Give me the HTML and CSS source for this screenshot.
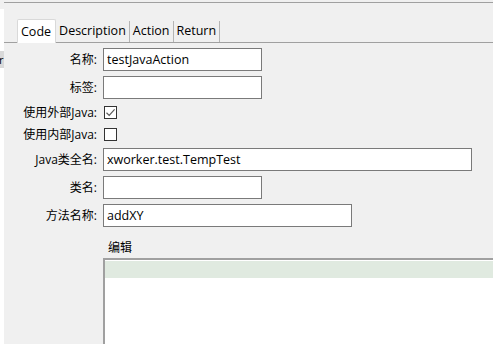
FILE: index.html
```html
<!DOCTYPE html>
<html>
<head>
<meta charset="utf-8">
<link rel="stylesheet" href="styles.css">
</head>
<body>
<div class="app">
  <div class="sidebar">
    <div class="side-item">r</div>
  </div>
  <div class="main">
    <div class="tabs">
      <div class="tab active">Code</div>
      <div class="tab">Description</div>
      <div class="tab">Action</div>
      <div class="tab">Return</div>
    </div>
    <div class="form">
      <label class="lbl">名称:</label>
      <div class="field"><input class="input short" value="testJavaAction"></div>
      <label class="lbl">标签:</label>
      <div class="field"><input class="input short" value=""></div>
      <label class="lbl chk-row">使用外部Java:</label>
      <div class="field chk-row"><span class="checkbox checked"><svg viewBox="0 0 13 13" width="13" height="13"><path d="M2.5 6.8 L5.2 9.4 L10.6 3.4" fill="none" stroke="#5a5a5a" stroke-width="1.2"/></svg></span></div>
      <label class="lbl chk-row">使用内部Java:</label>
      <div class="field chk-row"><span class="checkbox"></span></div>
      <label class="lbl">Java类全名:</label>
      <div class="field"><input class="input long" value="xworker.test.TempTest"></div>
      <label class="lbl">类名:</label>
      <div class="field"><input class="input short" value=""></div>
      <label class="lbl">方法名称:</label>
      <div class="field"><input class="input mid" value="addXY"></div>
    </div>
    <div class="editor-label">编辑</div>
    <div class="editor">
      <div class="editor-line"></div>
    </div>
  </div>
</div>
</body>
</html>
```
FILE: styles.css
```css
html, body {
  margin: 0;
  padding: 0;
  background: #f0f0f0;
  overflow: hidden;
  width: 493px;
  height: 344px;
}
body {
  font-family: "Open Sans", "Noto Sans CJK SC", sans-serif;
  font-size: 12px;
  color: #000;
}
.app {
  display: flex;
  height: 344px;
}
.sidebar {
  width: 4px;
  flex: none;
  background: #fff;
  margin-top: 9px;
  overflow: hidden;
}
.side-item {
  margin-top: 42px;
  height: 17px;
  background: #d9d9d9;
  line-height: 17px;
  font-size: 11px;
  text-indent: -1px;
}
.main {
  flex: 1;
  min-width: 0;
  display: flex;
  flex-direction: column;
  margin-top: 2px;
  border-top: 1px solid #a0a0a0;
}
.tabs {
  display: flex;
  align-items: flex-end;
  padding: 16px 0 0 13px;
  border-bottom: 1px solid #a0a0a0;
  height: 23px;
}
.tab {
  height: 21px;
  line-height: 20px;
  padding: 0 3px;
  font-size: 12.5px;
  border-right: 1px solid #b4b4b4;
  box-sizing: border-box;
}
.tab.active {
  height: 24px;
  line-height: 24px;
  margin-bottom: -1px;
  background: #fff;
  border: 1px solid #d9d9d9;
  border-bottom: none;
  border-radius: 2px 2px 0 0;
  padding: 0 4px 0 3px;
}
.form {
  display: grid;
  grid-template-columns: 93px 1fr;
  column-gap: 6px;
  row-gap: 5px;
  padding-top: 5px;
}
.lbl {
  text-align: right;
  height: 23px;
  line-height: 23px;
  white-space: nowrap;
}
.field {
  height: 23px;
  display: flex;
  align-items: center;
}
.chk-row {
  height: 17px;
  line-height: 17px;
}
.input {
  box-sizing: border-box;
  height: 23px;
  border: 1px solid #7a7a7a;
  background: #fff;
  padding: 0 3px;
  margin: 0;
  font: inherit;
  font-size: 12.5px;
  outline: none;
}
.input.short { width: 159px; }
.input.long { width: 369px; }
.input.mid { width: 249px; }
.checkbox {
  box-sizing: border-box;
  width: 13px;
  height: 13px;
  border: 1px solid #333;
  background: #fff;
  margin-left: 1px;
  display: flex;
  align-items: center;
  justify-content: center;
}
.checkbox svg {
  display: block;
  flex: none;
}
.editor-label {
  margin: 13px 0 0 104px;
  height: 15px;
  line-height: 15px;
}
.editor {
  margin: 3px 0 0 99px;
  flex: 1;
  background: #fff;
  border-top: 2px solid #a0a0a0;
  border-left: 2px solid #a0a0a0;
  padding-top: 1px;
}
.editor-line {
  height: 17px;
  background: #e0eae0;
}
```
